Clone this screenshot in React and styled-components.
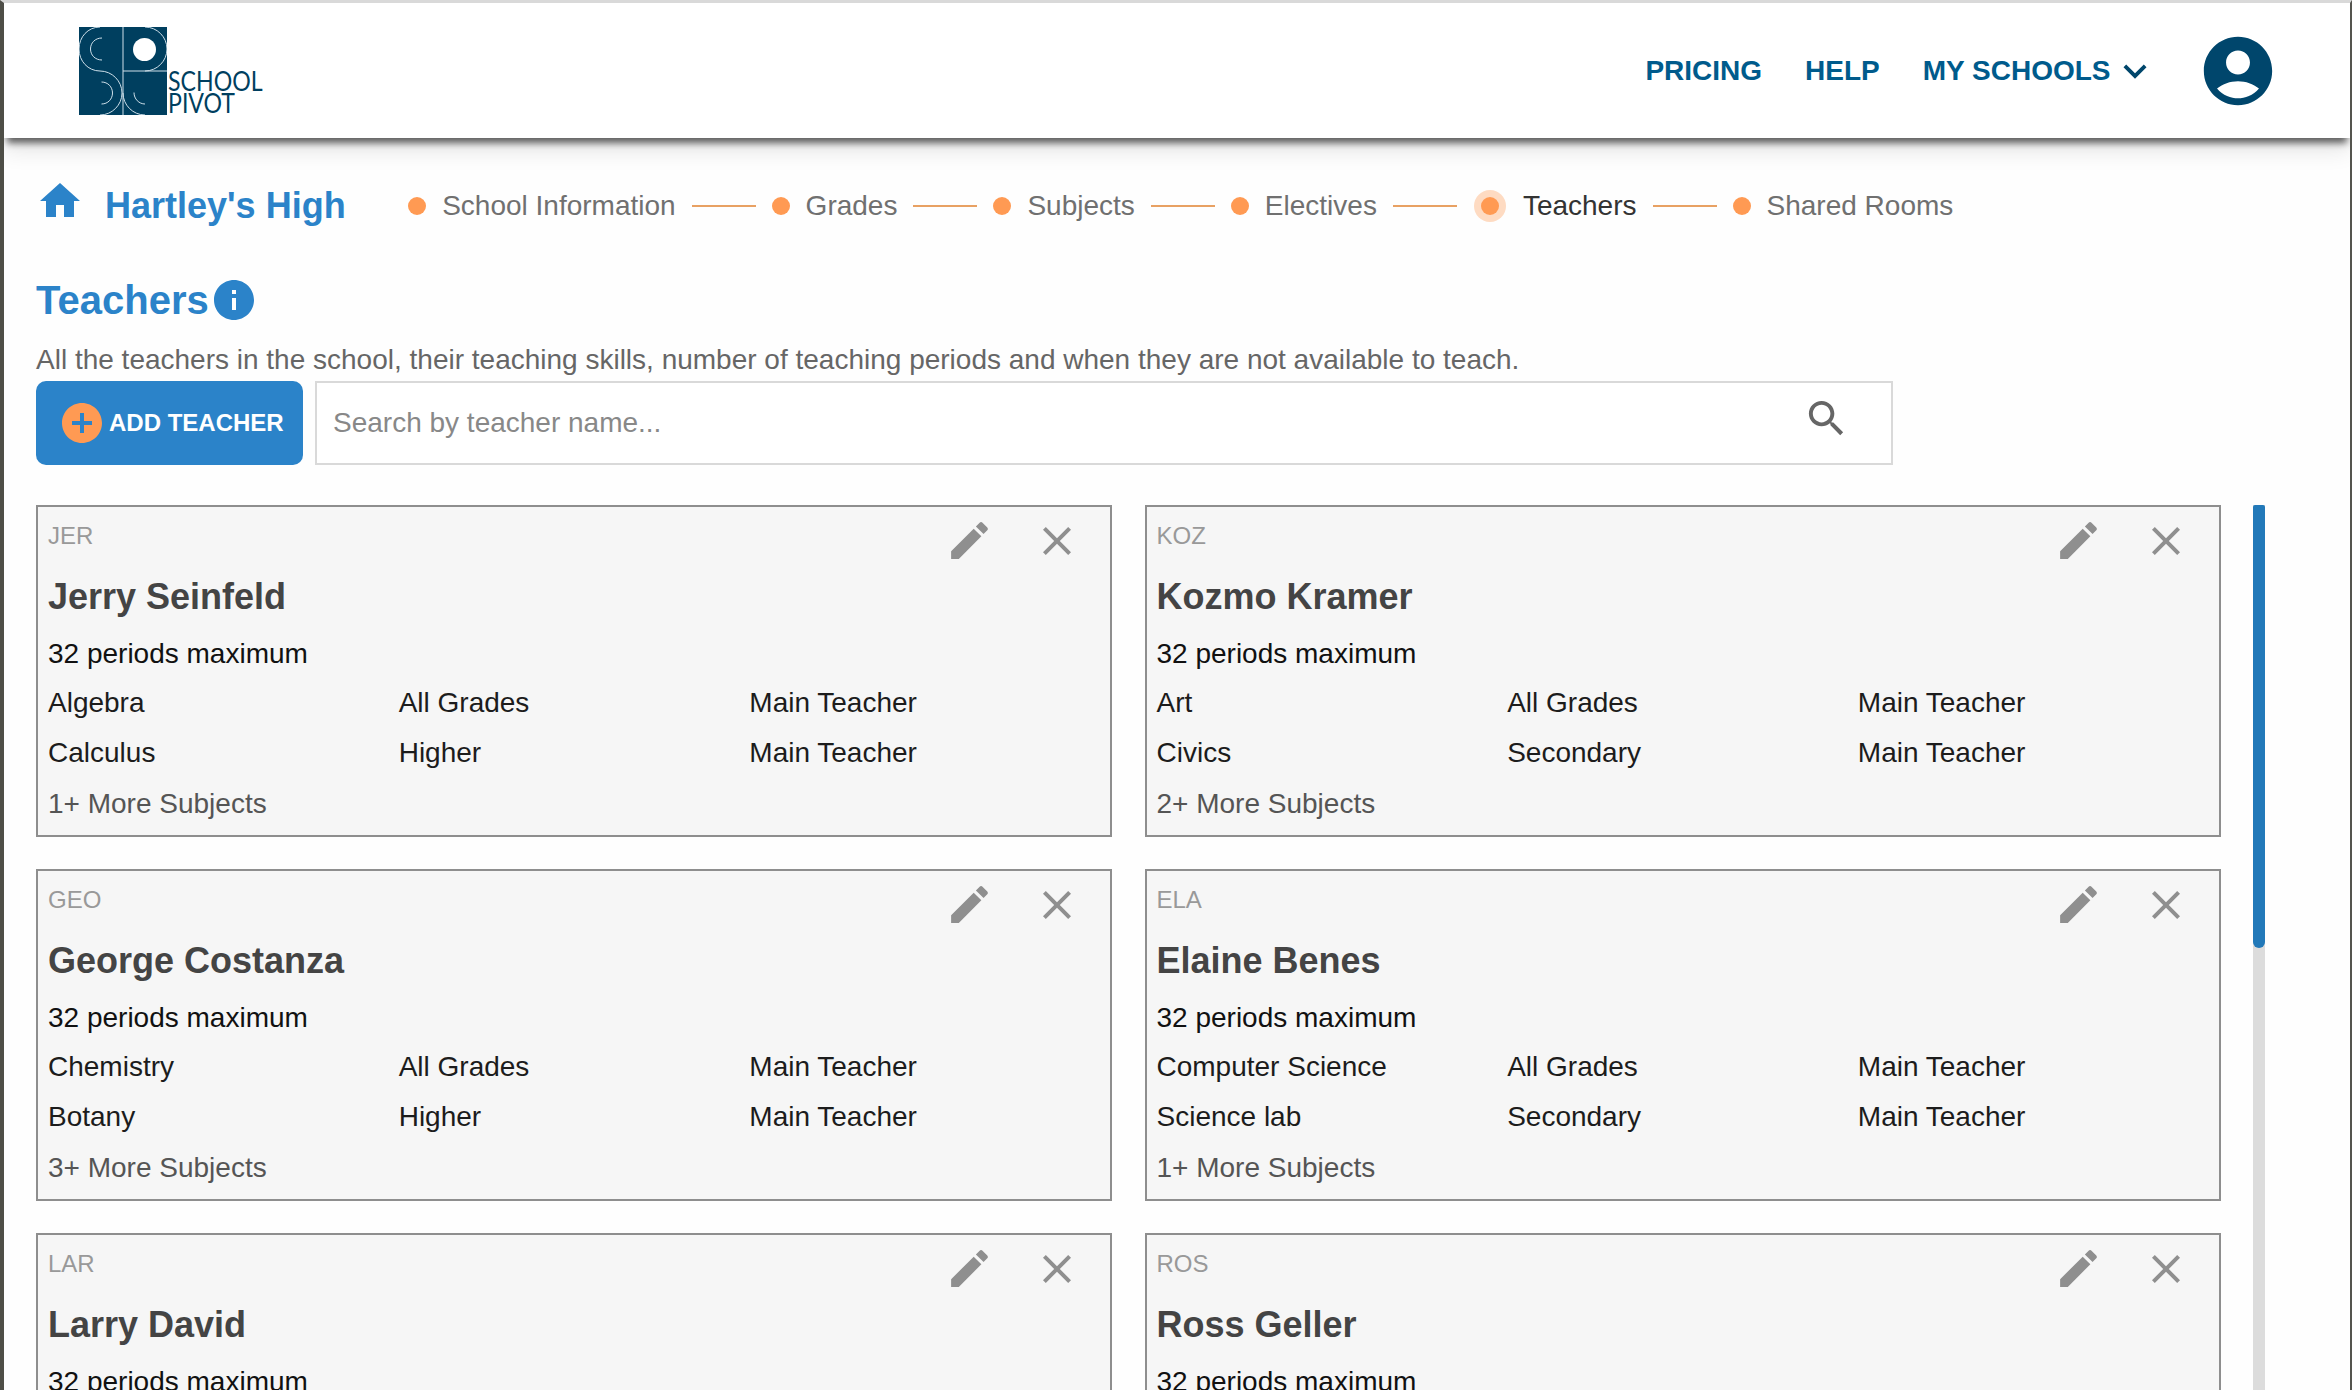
import React from "react";
import styled, { createGlobalStyle } from "styled-components";

const Global = createGlobalStyle`
  html, body { margin: 0; padding: 0; height: 1390px; overflow: hidden; background: #fff; }
  body { font-family: "Liberation Sans", Arial, sans-serif; }
  * { box-sizing: border-box; }
`;

const Frame = styled.div`
  height: 1390px; display: flex; flex-direction: column;
  border-left: 4px solid #4e4e47; border-right: 2px solid #55554f;
  border-top: 3px solid #d9d9d9; background: #fefefe; overflow: hidden;
`;
const Header = styled.header`
  height: 135px; flex: none; display: flex; align-items: center; justify-content: space-between;
  padding: 0 71px 0 75px; background: #fff; position: relative;
  box-shadow: 0 8px 7px -3px rgba(0,0,0,.6), 0 14px 20px rgba(0,0,0,.09);
`;
const Brand = styled.div`display: flex; align-items: flex-end; gap: 1px;`;
const BrandName = styled.div`
  font-family: Lato, sans-serif; font-size: 26px; line-height: 22px; color: #003f5f; margin-bottom: 1px;
  transform: scaleX(.89); transform-origin: left center; width: 94px;
`;
const Nav = styled.nav`display: flex; align-items: center; gap: 43px;`;
const NavLink = styled.a`
  font-size: 28px; font-weight: 700; color: #005b8c; display: flex; align-items: center; line-height: 46px;
`;
const Account = styled.svg`margin-left: -1.5px; fill: #00466c; display: block;`;
const NavIcon = styled.svg`fill: #00466c; display: block; margin-left: 1px; margin-right: -2px;`;

const Main = styled.main`flex: 1; min-height: 0; padding: 0 0 0 32px; display: flex; flex-direction: column;`;
const Crumbs = styled.div`margin-top: 40px; height: 56px; display: flex; align-items: center;`;
const HomeIcon = styled.svg`fill: #2b83c9; margin-right: 21px; margin-top: -10px; flex: none;`;
const SchoolName = styled.div`font-size: 36px; font-weight: 700; color: #2b83c9; white-space: nowrap;`;
const Stepper = styled.div`display: flex; align-items: center; margin-left: 62.5px; gap: 16px;`;
const Dot = styled.span`
  width: 18px; height: 18px; border-radius: 50%; background: #ff9a53; flex: none;
  ${(p) => p.$active && "margin: 0 8px; box-shadow: 0 0 0 7px rgba(255,154,83,.35);"}
`;
const StepLabel = styled.span`font-size: 28px; color: ${(p) => (p.$active ? "#333" : "#707070")}; white-space: nowrap;`;
const StepLine = styled.span`width: 64px; height: 2px; background: #e8a163; flex: none;`;

const TitleRow = styled.div`margin-top: 38px; height: 56px; display: flex; align-items: center;`;
const Title = styled.h1`margin: 0; font-size: 40px; font-weight: 700; color: #2b83c9; line-height: 56px;`;
const InfoIcon = styled.svg`fill: #2b83c9; flex: none; margin-left: 1px;`;
const Description = styled.p`margin: 12px 0 0; font-size: 28px; line-height: 40px; color: #666; white-space: nowrap;`;

const Toolbar = styled.div`margin-top: 1px; display: flex; gap: 12px; height: 84px;`;
const AddButton = styled.button`
  width: 267px; height: 84px; border: 0; border-radius: 10px; background: #2b83c9; color: #fff; padding: 0 0 0 22px;
  display: flex; align-items: center; gap: 3px; font-family: inherit; font-size: 24px; font-weight: 700; white-space: nowrap;
`;
const AddIcon = styled.svg`fill: #ff9a53; flex: none;`;
const SearchBox = styled.div`
  width: 1578px; height: 84px; border: 2px solid #d9d9d9; background: #fff; display: flex; align-items: center; padding: 0 41px 0 14px;
`;
const SearchInput = styled.input`
  flex: 1; border: 0; outline: 0; background: transparent; font-family: inherit; font-size: 28px; color: #333;
  &::placeholder { color: #888; opacity: 1; }
`;
const SearchIcon = styled.svg`fill: #666; flex: none; margin-top: -9px;`;

const Board = styled.div`margin-top: 40px; flex: 1; min-height: 0; display: flex; gap: 32.5px; overflow: hidden;`;
const CardGrid = styled.div`
  width: 2184.5px; flex: none; display: grid; grid-template-columns: 1076px 1076px; grid-auto-rows: 332px; gap: 32px 32.5px;
`;
const Card = styled.article`
  border: 2px solid #8e8e8e; background: #f6f6f6; padding: 1px 10px 0; height: 332px;
`;
const CardTop = styled.div`height: 56px; display: flex; justify-content: space-between; padding-top: 8px; position: relative;`;
const Code = styled.span`font-size: 24px; line-height: 40px; color: #999;`;
const Actions = styled.div`display: flex; gap: 39px; margin-right: 19px;`;
const ActionIcon = styled.svg`fill: #8f8f8f; display: block; ${(p) => p.$low && "margin-top: 1px;"}`;
const Name = styled.h2`margin: 0; font-size: 36px; line-height: 66px; font-weight: 700; color: #444;`;
const Periods = styled.div`font-size: 28px; line-height: 48px; color: #111;`;
const SubjectRow = styled.div`display: grid; grid-template-columns: repeat(3, 1fr); font-size: 28px; line-height: 50px; color: #1c1c1c;`;
const More = styled.div`font-size: 28px; line-height: 52px; color: #555;`;

const Track = styled.div`width: 12px; flex: none; background: #dcdcdc; position: relative;`;
const Thumb = styled.div`height: 443px; background: #2279b9; border-radius: 2px 2px 6px 6px;`;

const teachers = [
  { code: "JER", name: "Jerry Seinfeld", rows: [["Algebra", "All Grades"], ["Calculus", "Higher"]], more: 1 },
  { code: "KOZ", name: "Kozmo Kramer", rows: [["Art", "All Grades"], ["Civics", "Secondary"]], more: 2 },
  { code: "GEO", name: "George Costanza", rows: [["Chemistry", "All Grades"], ["Botany", "Higher"]], more: 3 },
  { code: "ELA", name: "Elaine Benes", rows: [["Computer Science", "All Grades"], ["Science lab", "Secondary"]], more: 1 },
  { code: "LAR", name: "Larry David", rows: [] },
  { code: "ROS", name: "Ross Geller", rows: [] },
];

const steps = ["School Information", "Grades", "Subjects", "Electives", "Teachers", "Shared Rooms"];

function LogoMark() {
  return (
    <svg width="88" height="88" viewBox="0 0 88 88" style={{ display: "block" }}>
      <rect width="88" height="88" fill="#003f5f" />
      <g fill="none" stroke="#cfe0ea" strokeWidth="1">
        <path d="M44 0V88M44 44H88" />
        <path d="M21 0C9 0 0 10 0 22C0 34 9 44 21 44C33 44 43 54 43 66C43 78 33 88 21 88" />
        <path d="M66 0C78 0 88 10 88 22C88 34 78 44 66 44" />
        <path d="M44 66C44 78 54 88 66 88" />
        <path d="M23 11C16 11 11.5 16 11.5 22C11.5 28 16 33 23 33" />
        <path d="M22.5 55C29 55 33.5 60 33.5 66C33.5 72 29 77 22.5 77" />
        <path d="M55 65.5C55 72 60 77 66 77" />
      </g>
      <circle cx="65.5" cy="22.5" r="11.5" fill="#fff" />
    </svg>
  );
}

export default function App() {
  return (
    <>
      <Global />
      <Frame>
        <Header>
          <Brand>
            <LogoMark />
            <BrandName>SCHOOL<br />PIVOT</BrandName>
          </Brand>
          <Nav>
            <NavLink>PRICING</NavLink>
            <NavLink>HELP</NavLink>
            <NavLink>
              MY SCHOOLS
              <NavIcon width="46" height="46" viewBox="0 0 24 24"><path d="M16.59 8.59L12 13.17 7.41 8.59 6 10l6 6 6-6z" /></NavIcon>
            </NavLink>
            <Account width="82" height="82" viewBox="0 0 24 24">
              <path d="M12 2C6.48 2 2 6.48 2 12s4.48 10 10 10 10-4.48 10-10S17.52 2 12 2zm0 4c1.93 0 3.5 1.57 3.5 3.5S13.93 13 12 13s-3.5-1.57-3.5-3.5S10.07 6 12 6zm0 14c-2.03 0-4.43-.82-6.14-2.88C7.55 15.8 9.68 15 12 15s4.45.8 6.14 2.12C16.43 19.18 14.03 20 12 20z" />
            </Account>
          </Nav>
        </Header>
        <Main>
          <Crumbs>
            <HomeIcon width="48" height="48" viewBox="0 0 24 24"><path d="M10 20v-6h4v6h5v-8h3L12 3 2 12h3v8z" /></HomeIcon>
            <SchoolName>Hartley's High</SchoolName>
            <Stepper>
              {steps.map((s, i) => (
                <React.Fragment key={s}>
                  {i > 0 && <StepLine />}
                  <Dot $active={s === "Teachers"} />
                  <StepLabel $active={s === "Teachers"}>{s}</StepLabel>
                </React.Fragment>
              ))}
            </Stepper>
          </Crumbs>
          <TitleRow>
            <Title>Teachers</Title>
            <InfoIcon width="48" height="48" viewBox="0 0 24 24"><path d="M12 2C6.48 2 2 6.48 2 12s4.48 10 10 10 10-4.48 10-10S17.52 2 12 2zm1 15h-2v-6h2v6zm0-8h-2V7h2v2z" /></InfoIcon>
          </TitleRow>
          <Description>All the teachers in the school, their teaching skills, number of teaching periods and when they are not available to teach.</Description>
          <Toolbar>
            <AddButton>
              <AddIcon width="48" height="48" viewBox="0 0 24 24"><path d="M12 2C6.48 2 2 6.48 2 12s4.48 10 10 10 10-4.48 10-10S17.52 2 12 2zm5 11h-4v4h-2v-4H7v-2h4V7h2v4h4v2z" /></AddIcon>
              ADD TEACHER
            </AddButton>
            <SearchBox>
              <SearchInput placeholder="Search by teacher name..." />
              <SearchIcon width="47" height="47" viewBox="0 0 24 24"><path d="M15.5 14h-.79l-.28-.27C15.41 12.59 16 11.11 16 9.5 16 5.91 13.09 3 9.5 3S3 5.91 3 9.5 5.91 16 9.5 16c1.61 0 3.09-.59 4.23-1.57l.27.28v.79l5 4.99L20.49 19l-4.99-5zm-6 0C7.01 14 5 11.99 5 9.5S7.01 5 9.5 5 14 7.01 14 9.5 11.99 14 9.5 14z" /></SearchIcon>
            </SearchBox>
          </Toolbar>
          <Board>
            <CardGrid>
              {teachers.map((t) => (
                <Card key={t.code}>
                  <CardTop>
                    <Code>{t.code}</Code>
                    <Actions>
                      <ActionIcon width="49" height="49" viewBox="0 0 24 24"><path d="M3 17.25V21h3.75L17.81 9.94l-3.75-3.75L3 17.25zM20.71 7.04c.39-.39.39-1.02 0-1.41l-2.34-2.34c-.39-.39-1.02-.39-1.41 0l-1.83 1.83 3.75 3.75 1.83-1.83z" /></ActionIcon>
                      <ActionIcon $low width="48" height="48" viewBox="0 0 24 24"><path d="M19 6.41L17.59 5 12 10.59 6.41 5 5 6.41 10.59 12 5 17.59 6.41 19 12 13.41 17.59 19 19 17.59 13.41 12z" /></ActionIcon>
                    </Actions>
                  </CardTop>
                  <Name>{t.name}</Name>
                  <Periods>32 periods maximum</Periods>
                  {t.rows.map((r) => (
                    <SubjectRow key={r[0]}>
                      <span>{r[0]}</span>
                      <span>{r[1]}</span>
                      <span>Main Teacher</span>
                    </SubjectRow>
                  ))}
                  {t.more && <More>{t.more}+ More Subjects</More>}
                </Card>
              ))}
            </CardGrid>
            <Track><Thumb /></Track>
          </Board>
        </Main>
      </Frame>
    </>
  );
}
